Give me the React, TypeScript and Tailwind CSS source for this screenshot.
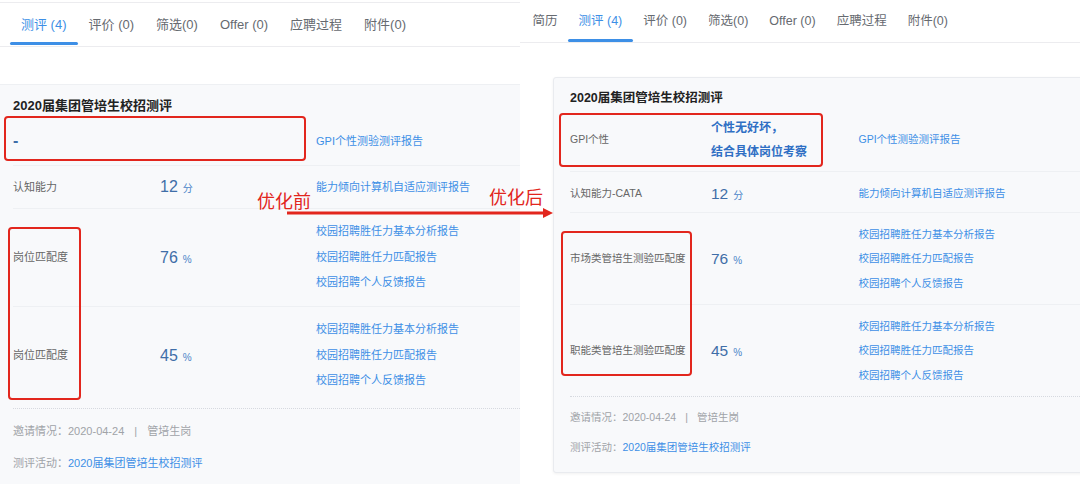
import React from "react";

const FONT = { fontFamily: '"Liberation Sans", "Noto Sans CJK SC", sans-serif' };

const leftTabs = ["测评 (4)", "评价 (0)", "筛选(0)", "Offer (0)", "应聘过程", "附件(0)"];
const rightTabs = ["简历", "测评 (4)", "评价 (0)", "筛选(0)", "Offer (0)", "应聘过程", "附件(0)"];

const matchLinks = ["校园招聘胜任力基本分析报告", "校园招聘胜任力匹配报告", "校园招聘个人反馈报告"];

function Score({ value, unit, big }: { value: string; unit: string; big?: boolean }) {
  return (
    <span className="text-[#3f6ea8]">
      <span className={big ? "text-[16px]" : "text-[15.5px]"}>{value}</span>
      <span className="ml-[5px] text-[10px] text-[#4a84c8]">{unit}</span>
    </span>
  );
}

function LeftPanel() {
  return (
    <div className="flex w-[520px] flex-col pt-[2px]">
      <div className="flex h-[45px] items-stretch border-y border-[#ececef] pl-[10px]">
        {leftTabs.map((t, i) => (
          <div
            key={t}
            className={`relative flex items-center px-[11px] text-[13px] ${
              i === 0 ? "text-[#3d8fe6]" : "text-[#666a70]"
            }`}
          >
            {t}
            {i === 0 && <div className="absolute bottom-[1px] left-0 right-0 h-[3px] rounded-full bg-[#3d8fe6]" />}
          </div>
        ))}
      </div>

      <div className="mt-[37px] flex-1 border-t border-[#eef0f3] bg-[#f8f9fb]">
        <div className="pl-[13px] pt-[13px] pb-[3px] text-[13px] font-bold leading-[16px] text-[#222]">
          2020届集团管培生校招测评
        </div>

        <div className="ml-[13px] text-[11px]">
          <div className="flex h-[49px] items-center border-b border-[#eef0f3]">
            <div className="w-[147px] text-[16px] font-bold text-[#3f6ea8]">-</div>
            <div className="w-[156px]" />
            <div className="text-[#3d8fe6]">GPI个性测验测评报告</div>
          </div>
          <div className="flex h-[43px] items-center border-b border-[#eef0f3]">
            <div className="w-[147px] text-[#666]">认知能力</div>
            <div className="w-[156px]">
              <Score value="12" unit="分" big />
            </div>
            <div className="text-[#3d8fe6]">能力倾向计算机自适应测评报告</div>
          </div>
          <div className="flex h-[98px] items-center border-b border-[#eef0f3]">
            <div className="w-[147px] text-[#666]">岗位匹配度</div>
            <div className="w-[156px]">
              <Score value="76" unit="%" big />
            </div>
            <div className="flex flex-col leading-[25.5px] text-[#3d8fe6]">
              {matchLinks.map((l) => (
                <span key={l}>{l}</span>
              ))}
            </div>
          </div>
          <div className="flex h-[97px] items-center">
            <div className="w-[147px] text-[#666]">岗位匹配度</div>
            <div className="w-[156px]">
              <Score value="45" unit="%" big />
            </div>
            <div className="flex flex-col leading-[25.5px] text-[#3d8fe6]">
              {matchLinks.map((l) => (
                <span key={l}>{l}</span>
              ))}
            </div>
          </div>
          <div className="mt-[4px] border-t border-dotted border-[#d6d9df] pt-[14px] text-[11px] leading-[16px] text-[#a0a3a8]">
            <div>
              邀请情况：2020-04-24<span className="mx-[10px]">|</span>管培生岗
            </div>
            <div className="mt-[16px]">
              测评活动：<span className="text-[#3d8fe6]">2020届集团管培生校招测评</span>
            </div>
          </div>
        </div>
      </div>
    </div>
  );
}

function RightPanel() {
  return (
    <div className="flex w-[560px] flex-col">
      <div className="flex h-[43px] items-stretch border-b border-[#ececef] pl-[2px]">
        {rightTabs.map((t, i) => (
          <div
            key={t}
            className={`relative flex items-center px-[10.5px] pt-[1px] text-[12.5px] ${
              i === 1 ? "text-[#3d8fe6]" : "text-[#666a70]"
            }`}
          >
            {t}
            {i === 1 && <div className="absolute bottom-0 left-0 right-0 h-[3px] rounded-full bg-[#3d8fe6]" />}
          </div>
        ))}
      </div>

      <div className="ml-[33px] mt-[34px] h-[396px] w-[560px] rounded-[3px] border border-[#e9ebef] bg-[#f8f9fb] pl-[16px] shadow-[0_1px_3px_rgba(0,0,0,0.06)]">
        <div className="pt-[12px] pb-[8px] text-[12.5px] font-bold leading-[16px] text-[#222]">
          2020届集团管培生校招测评
        </div>

        <div className="text-[10.5px]">
          <div className="flex h-[58px] items-center border-b border-[#eef0f3] pb-[5px]">
            <div className="w-[141px] text-[#666]">GPI个性</div>
            <div className="flex w-[147.5px] flex-col text-[12px] font-bold leading-[24px] text-[#2f6fc4]">
              <span>个性无好坏，</span>
              <span>结合具体岗位考察</span>
            </div>
            <div className="text-[#3d8fe6]">GPI个性测验测评报告</div>
          </div>
          <div className="flex h-[41px] items-center border-b border-[#eef0f3] pt-[4px]">
            <div className="w-[141px] text-[#666]">认知能力-CATA</div>
            <div className="w-[147.5px]">
              <Score value="12" unit="分" />
            </div>
            <div className="text-[#3d8fe6]">能力倾向计算机自适应测评报告</div>
          </div>
          <div className="flex h-[92px] items-center border-b border-[#eef0f3]">
            <div className="w-[141px] text-[#666]">市场类管培生测验匹配度</div>
            <div className="w-[147.5px]">
              <Score value="76" unit="%" />
            </div>
            <div className="flex flex-col leading-[24.5px] text-[#3d8fe6]">
              {matchLinks.map((l) => (
                <span key={l}>{l}</span>
              ))}
            </div>
          </div>
          <div className="flex h-[91px] items-center">
            <div className="w-[141px] text-[#666]">职能类管培生测验匹配度</div>
            <div className="w-[147.5px]">
              <Score value="45" unit="%" />
            </div>
            <div className="flex flex-col leading-[24.5px] text-[#3d8fe6]">
              {matchLinks.map((l) => (
                <span key={l}>{l}</span>
              ))}
            </div>
          </div>
          <div className="border-t border-dotted border-[#d6d9df] pt-[12px] text-[10.5px] leading-[16px] text-[#a0a3a8]">
            <div>
              邀请情况：2020-04-24<span className="mx-[9px]">|</span>管培生岗
            </div>
            <div className="mt-[14px]">
              测评活动：<span className="text-[#3d8fe6]">2020届集团管培生校招测评</span>
            </div>
          </div>
        </div>
      </div>
    </div>
  );
}

export default function App() {
  return (
    <div className="relative flex h-[484px] w-[1080px] overflow-hidden bg-white" style={FONT}>
      <LeftPanel />
      <RightPanel />

      {/* annotation overlays */}
      <div className="absolute left-[4px] top-[116px] h-[45px] w-[302px] rounded-[4px] border-2 border-[#e2261d]" />
      <div className="absolute left-[8px] top-[227px] h-[173px] w-[73px] rounded-[4px] border-2 border-[#e2261d]" />
      <div className="absolute left-[559px] top-[113px] h-[54px] w-[264px] rounded-[4px] border-2 border-[#e2261d]" />
      <div className="absolute left-[561px] top-[231px] h-[145px] w-[131px] rounded-[4px] border-2 border-[#e2261d]" />

      <div
        className="absolute left-[257px] top-[190px] text-[18px] leading-[20px] text-[#e2261d]"
        style={{ fontFamily: '"Noto Sans CJK SC", sans-serif' }}
      >
        优化前
      </div>
      <div
        className="absolute left-[489px] top-[186px] text-[18px] leading-[20px] text-[#e2261d]"
        style={{ fontFamily: '"Noto Sans CJK SC", sans-serif' }}
      >
        优化后
      </div>
      <svg className="absolute left-[285px] top-[205px]" width="272" height="16" viewBox="0 0 272 16">
        <line x1="2" y1="8" x2="260" y2="8" stroke="#e2261d" strokeWidth="3" />
        <polygon points="258,3 268,8 258,13" fill="#e2261d" />
      </svg>
    </div>
  );
}
